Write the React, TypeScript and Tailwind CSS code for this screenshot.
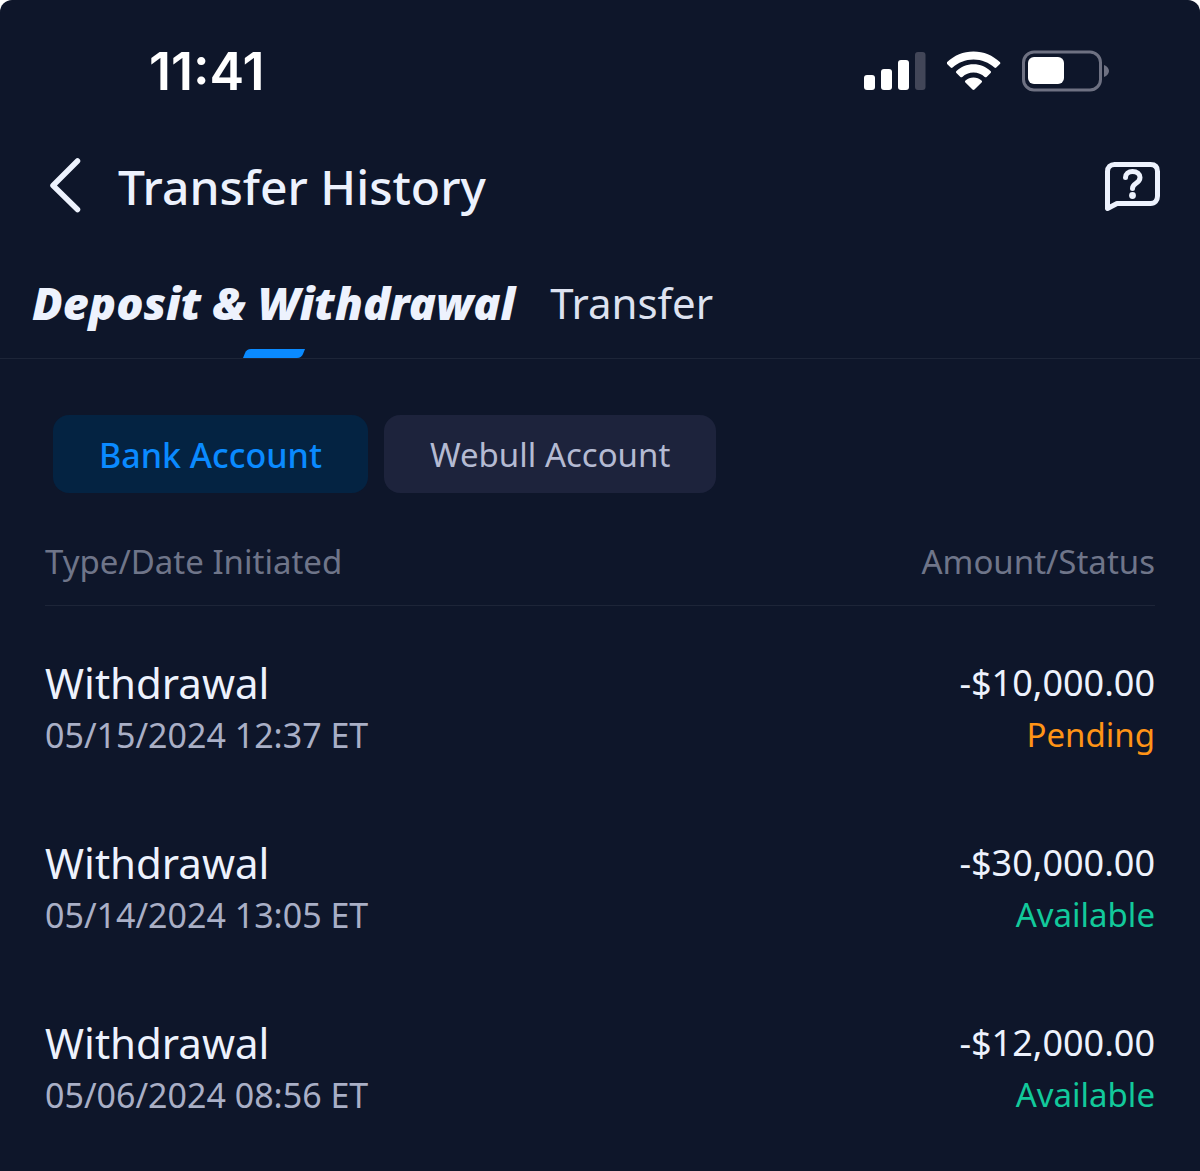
import { useState } from 'react';

interface TransferRecord {
  type: string;
  date: string;
  amount: string;
  status: 'Pending' | 'Available';
}

const records: TransferRecord[] = [
  { type: 'Withdrawal', date: '05/15/2024 12:37 ET', amount: '-$10,000.00', status: 'Pending' },
  { type: 'Withdrawal', date: '05/14/2024 13:05 ET', amount: '-$30,000.00', status: 'Available' },
  { type: 'Withdrawal', date: '05/06/2024 08:56 ET', amount: '-$12,000.00', status: 'Available' },
];

const accounts = ['Bank Account', 'Webull Account'];

function StatusBar() {
  return (
    <div className="flex h-36 items-center justify-between pr-[90px] pl-[149px]">
      <span className="font-['Inter',sans-serif] text-[52px] leading-[60px] font-semibold text-white">11:41</span>
      <div className="flex items-center gap-[21px]">
        {/* Signal */}
        <svg width="62" height="42" viewBox="0 0 62 42" fill="#fff">
          <rect x="0" y="24" width="11" height="15" rx="3" />
          <rect x="17" y="18" width="11" height="21" rx="3" />
          <rect x="34" y="9" width="11" height="30" rx="3" />
          <rect x="51" y="1" width="10.500" height="38" rx="3" fill="#424658" />
        </svg>
        {/* Wifi */}
        <svg width="54" height="42" viewBox="0 0 54 42" fill="#fff">
          <path d="M26.500 0.500C36.700 0.500 46 4.500 52.800 11.100C53.500 11.800 53.500 12.500 52.900 13.100L49.300 16.600C48.700 17.200 48 17.200 47.400 16.600C41.900 11.500 34.600 8.500 26.500 8.500C18.400 8.500 11.100 11.500 5.600 16.600C5 17.200 4.300 17.200 3.700 16.600L0.100 13.100C-0.500 12.500 -0.500 11.800 0.200 11.100C7 4.500 16.300 0.500 26.500 0.500Z" />
          <path d="M26.500 13.300C33.200 13.300 39.100 15.900 43.500 20.100C44.200 20.800 44.200 21.500 43.600 22.100L39.600 25.900C39 26.500 38.300 26.500 37.700 25.900C34.700 23.200 30.800 21.500 26.500 21.500C22.200 21.500 18.300 23.200 15.300 25.900C14.700 26.500 14 26.500 13.400 25.900L9.400 22.100C8.800 21.500 8.800 20.800 9.500 20.100C13.900 15.900 19.800 13.300 26.500 13.300Z" />
          <path d="M26.500 26.500C29.600 26.500 32.300 27.600 34.500 29.500C35.200 30.100 35.200 30.900 34.600 31.500L27.500 38.600C26.900 39.200 26.100 39.200 25.500 38.600L18.400 31.500C17.800 30.900 17.800 30.100 18.500 29.500C20.700 27.600 23.400 26.500 26.500 26.500Z" />
        </svg>
        {/* Battery */}
        <svg width="88" height="44" viewBox="0 0 88 44" fill="none">
          <rect x="1.500" y="2" width="77" height="38" rx="10.500" stroke="#6e7182" strokeWidth="3" />
          <rect x="6" y="7" width="36" height="27" rx="6" fill="#fff" />
          <path d="M82 15C85 16 87 18.500 87 21C87 23.500 85 26 82 27Z" fill="#6e7182" />
        </svg>
      </div>
    </div>
  );
}

function Header() {
  return (
    <header className="flex h-[84px] items-center justify-between pr-[38px] pl-12">
      <div className="flex items-center gap-9">
        <button type="button" aria-label="Back">
          <svg width="34" height="56" viewBox="0 0 34 56" fill="none" stroke="#edf2fd" strokeWidth="5.500" strokeLinecap="round" strokeLinejoin="round">
            <path d="M29.500 3L5 27.500L29.500 51.500" />
          </svg>
        </button>
        <h1 className="pt-0.5 text-[48px] leading-[64px] font-medium">Transfer History</h1>
      </div>
      <button type="button" aria-label="Help">
        <svg width="58" height="52" viewBox="0 0 58 52" fill="none" stroke="#edf2fd" strokeWidth="5" strokeLinecap="round" strokeLinejoin="round">
          <path d="M3.500 48.500V11.500C3.500 7 6.500 4.500 10.500 4.500H46.500C51 4.500 53.500 7 53.500 11.500V36C53.500 40.500 51 43.500 46.500 43.500H13Z" />
          <path d="M21.500 17.500C21.500 14 24.500 11.500 28.500 11.500C33 11.500 36 14 36 17.500C36 20.500 34 22 31.800 23.500C29.500 25 28.500 26 28.500 28.500" />
          <circle cx="28.500" cy="35.500" r="3.400" fill="#edf2fd" stroke="none" />
        </svg>
      </button>
    </header>
  );
}

export default function App() {
  const [tab, setTab] = useState('deposit');
  const [account, setAccount] = useState('Bank Account');

  const tabs = [
    { id: 'deposit', label: 'Deposit & Withdrawal' },
    { id: 'transfer', label: 'Transfer' },
  ];

  return (
    <div className="bg-white">
      <div className="min-h-screen rounded-t-xl bg-[#0e162a] font-['Noto_Sans','Open_Sans',sans-serif] text-[#edf2fd]">
        <StatusBar />
        <Header />

        <nav className="flex h-[131px] gap-[35px] border-b border-[#1d2538] px-8">
          {tabs.map((t) => (
            <button
              key={t.id}
              type="button"
              onClick={() => setTab(t.id)}
              className={`flex flex-col items-center justify-between pt-[47px] leading-[56px] ${
                tab === t.id ? 'text-[45px] font-black italic' : 'text-[42px] text-[#dde2f0]'
              }`}
            >
              {t.label}
              {tab === t.id && (
                <svg width="62" height="9" viewBox="0 0 62 9" fill="#0a8aff">
                  <path d="M0 9L2 4C3.200 1.200 5 0 8 0H62L60 5C58.800 7.800 57 9 54 9Z" />
                </svg>
              )}
            </button>
          ))}
        </nav>

        <main className="px-[45px] pt-14">
          {/* Account filter */}
          <div className="flex gap-4 pl-2">
            {accounts.map((a) => (
              <button
                key={a}
                type="button"
                onClick={() => setAccount(a)}
                className={`h-[78px] rounded-2xl px-[46px] pt-0.5 leading-[48px] ${
                  account === a
                    ? 'bg-[#042342] text-[34px] font-medium text-[#0a8aff]'
                    : 'bg-[#1d233c] text-[33px] text-[#b4bad2]'
                }`}
              >
                {a}
              </button>
            ))}
          </div>

          <table className="mt-8 w-full">
            <thead>
              <tr className="h-20 border-b border-[#1d2538] text-[33px] leading-[48px] text-[#6f7589]">
                <th className="pt-0 pb-1.5 text-left font-normal">Type/Date Initiated</th>
                <th className="pt-0 pb-1.5 text-right font-normal">Amount/Status</th>
              </tr>
            </thead>
            <tbody>
              {records.map((r) => (
                <tr key={r.date} className="h-[180px]">
                  <td className="pt-6">
                    <p className="text-[42px] leading-[56px]">{r.type}</p>
                    <p className="text-[34px] leading-[48px] text-[#a9afc6]">{r.date}</p>
                  </td>
                  <td className="pt-6 text-right">
                    <p className="text-[36px] leading-[56px]">{r.amount}</p>
                    <p className={`text-[33px] leading-[48px] ${r.status === 'Pending' ? 'text-[#ff9416]' : 'text-[#12c99b]'}`}>
                      {r.status}
                    </p>
                  </td>
                </tr>
              ))}
            </tbody>
          </table>
        </main>
      </div>
    </div>
  );
}
